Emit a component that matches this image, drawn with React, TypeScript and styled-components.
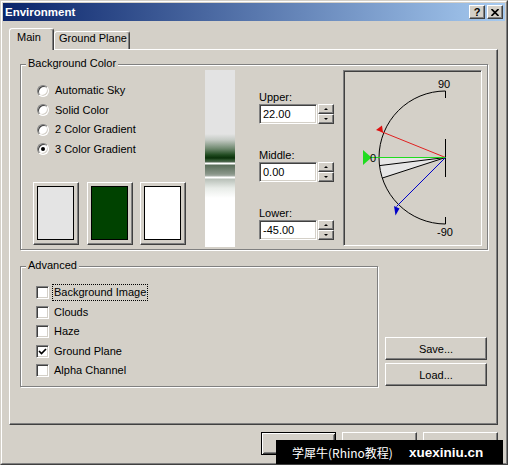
import React from 'react';
import styled, { createGlobalStyle, css } from 'styled-components';

const GlobalStyle = createGlobalStyle`
  html, body {
    margin: 0;
    padding: 0;
    background: #d4d0c8;
  }
  body {
    font-family: 'Liberation Sans', Arial, sans-serif;
    font-size: 11px;
    color: #000;
  }
`;

const raised = css`
  border: 1px solid;
  border-color: #fff #404040 #404040 #fff;
  box-shadow: inset -1px -1px 0 #808080, inset 1px 1px 0 #d4d0c8;
`;

const sunken = css`
  border: 1px solid;
  border-color: #808080 #fff #fff #808080;
  box-shadow: inset 1px 1px 0 #404040, inset -1px -1px 0 #d4d0c8;
`;

const Window = styled.div`
  position: relative;
  box-sizing: border-box;
  width: 508px;
  height: 465px;
  overflow: hidden;
  background: #d4d0c8;
  border: 1px solid;
  border-color: #d4d0c8 #404040 #404040 #d4d0c8;
`;

const Frame = styled.div`
  box-sizing: border-box;
  height: 100%;
  padding: 1px;
  display: flex;
  flex-direction: column;
  border: 1px solid;
  border-color: #fff #808080 #808080 #fff;
`;

const TitleBar = styled.div`
  height: 18px;
  flex: none;
  display: flex;
  align-items: center;
  padding: 0 2px;
  background: linear-gradient(to right, #0a246a, #a6caf0);
`;

const TitleText = styled.span`
  flex: 1;
  color: #fff;
  font-weight: 700;
  font-size: 11.5px;
`;

const CaptionButtons = styled.div`
  display: flex;
  gap: 2px;
`;

const CaptionButton = styled.div`
  ${raised};
  box-sizing: border-box;
  width: 16px;
  height: 14px;
  background: #d4d0c8;
  display: flex;
  align-items: center;
  justify-content: center;
  font-weight: 700;
  font-size: 11px;
  line-height: 1;
`;

const Body = styled.div`
  flex: 1;
  display: flex;
  flex-direction: column;
  padding: 7px 7px 0 6px;
`;

const TabStrip = styled.div`
  height: 21px;
  display: flex;
  align-items: flex-end;
`;

const Tab = styled.div<{ $active?: boolean; $w: number; $pad: number }>`
  position: relative;
  box-sizing: border-box;
  width: ${(p) => p.$w}px;
  padding-left: ${(p) => p.$pad}px;
  background: #d4d0c8;
  border: 1px solid;
  border-bottom: none;
  border-color: #fff #404040 transparent #fff;
  border-radius: 3px 3px 0 0;
  box-shadow: inset -1px 0 0 #808080;
  line-height: 13px;
  ${(p) =>
    p.$active
      ? css`
          height: 22px;
          margin-bottom: -1px;
          padding-top: 2px;
          z-index: 2;
        `
      : css`
          height: 18px;
          padding-top: 0;
        `}
`;

const Panel = styled.div`
  box-sizing: border-box;
  height: 376px;
  padding: 14px 0 0 10px;
  display: flex;
  flex-direction: column;
  border: 1px solid;
  border-color: #fff #404040 #404040 #fff;
  box-shadow: inset -1px -1px 0 #808080;
`;

const GroupBox = styled.div<{ $w: number; $h: number }>`
  position: relative;
  box-sizing: border-box;
  width: ${(p) => p.$w}px;
  height: ${(p) => p.$h}px;
  border: 1px solid #808080;
  box-shadow: inset 1px 1px 0 #fff, 1px 1px 0 #fff;
`;

const GroupLabel = styled.span`
  position: absolute;
  top: -8px;
  left: 5px;
  padding: 0 2px;
  line-height: 13px;
  background: #d4d0c8;
`;

const BackgroundRow = styled.div`
  display: flex;
  align-items: flex-start;
  padding-top: 5px;
`;

const LeftColumn = styled.div`
  width: 153px;
  margin-left: 12px;
  display: flex;
  flex-direction: column;
`;

const OptionList = styled.div<{ $top: number; $left: number }>`
  display: flex;
  flex-direction: column;
  margin-top: ${(p) => p.$top}px;
  padding-left: ${(p) => p.$left}px;
`;

const OptionRow = styled.div<{ $gap: number }>`
  height: 19.5px;
  display: flex;
  align-items: center;
  gap: ${(p) => p.$gap}px;
`;

const Radio = styled.span<{ $checked?: boolean }>`
  box-sizing: border-box;
  width: 12px;
  height: 12px;
  border-radius: 50%;
  background: #fff;
  border: 1px solid;
  border-color: #808080 #fff #fff #808080;
  box-shadow: inset 1px 1px 0 #404040, inset -1px -1px 0 #d4d0c8;
  display: flex;
  align-items: center;
  justify-content: center;
  &::after {
    content: '';
    width: 4px;
    height: 4px;
    border-radius: 50%;
    background: #000;
    display: ${(p) => (p.$checked ? 'block' : 'none')};
  }
`;

const CheckBox = styled.span`
  ${sunken};
  box-sizing: border-box;
  width: 13px;
  height: 13px;
  background: #fff;
  display: flex;
  align-items: center;
  justify-content: center;
`;

const OptionText = styled.span<{ $focused?: boolean }>`
  line-height: 13px;
  ${(p) =>
    p.$focused &&
    css`
      outline: 1px dotted #000;
      outline-offset: 1px;
    `}
`;

const Swatches = styled.div`
  display: flex;
  gap: 7.5px;
  margin-top: 23px;
`;

const Swatch = styled.div`
  ${raised};
  box-sizing: border-box;
  width: 46px;
  height: 63px;
  padding: 3px 4px 4px 3px;
  display: flex;
`;

const SwatchFill = styled.div<{ $color: string }>`
  flex: 1;
  border: 1px solid #000;
  background: ${(p) => p.$color};
`;

const GradientBar = styled.div`
  width: 30px;
  height: 177px;
  margin-left: 19px;
  background: linear-gradient(
    to bottom,
    #e3e3e3 0px,
    #e3e3e3 64px,
    #c4cac4 70px,
    #6b856b 79px,
    #1f4a1f 85px,
    #0a300a 88px,
    #2f552f 90px,
    #506650 92px,
    #ffffff 93px,
    #ffffff 94px,
    #5a6e5a 95px,
    #8a968a 104px,
    #a6aea6 106px,
    #ffffff 107px,
    #ffffff 108px,
    #b8c0b8 109px,
    #e8ece8 118px,
    #ffffff 128px,
    #ffffff 177px
  );
`;

const SpinColumn = styled.div`
  width: 75px;
  margin-left: 24px;
  margin-top: 20px;
  display: flex;
  flex-direction: column;
  gap: 24px;
`;

const SpinLabel = styled.div`
  line-height: 14px;
`;

const SpinRow = styled.div`
  display: flex;
  gap: 1px;
  height: 20px;
`;

const SpinInput = styled.div`
  ${sunken};
  box-sizing: border-box;
  width: 58px;
  background: #fff;
  padding-left: 3px;
  display: flex;
  align-items: center;
`;

const SpinButtons = styled.div`
  width: 16px;
  display: flex;
  flex-direction: column;
`;

const SpinButton = styled.div<{ $down?: boolean }>`
  ${raised};
  box-sizing: border-box;
  flex: 1;
  display: flex;
  align-items: center;
  justify-content: center;
  &::after {
    content: '';
    border-left: 2px solid transparent;
    border-right: 2px solid transparent;
    ${(p) =>
      p.$down
        ? css`
            border-top: 2px solid #000;
          `
        : css`
            border-bottom: 2px solid #000;
          `}
  }
`;

const Diagram = styled.div`
  ${sunken};
  box-sizing: border-box;
  width: 139px;
  height: 176px;
  margin-left: 9px;
  display: flex;
`;

const LowerRow = styled.div`
  display: flex;
  align-items: flex-end;
  margin-top: 16px;
`;

const ButtonColumn = styled.div`
  display: flex;
  flex-direction: column;
  gap: 3px;
  margin-left: 7px;
  margin-bottom: 1px;
`;

const PushButton = styled.div<{ $w: number; $default?: boolean }>`
  box-sizing: border-box;
  width: ${(p) => p.$w}px;
  height: 23px;
  display: flex;
  align-items: center;
  justify-content: center;
  background: #d4d0c8;
  ${(p) =>
    p.$default
      ? css`
          border: 1px solid #000;
          box-shadow: inset 1px 1px 0 #fff, inset -1px -1px 0 #404040,
            inset 2px 2px 0 #d4d0c8, inset -2px -2px 0 #808080;
        `
      : raised}
`;

const Footer = styled.div`
  display: flex;
  justify-content: flex-end;
  gap: 6px;
  margin-top: 7px;
`;

const Watermark = styled.div`
  position: absolute;
  right: 4px;
  bottom: -1px;
  width: 227px;
  height: 25px;
  background: #000;
  color: #fff;
  display: flex;
  align-items: center;
  padding-left: 16px;
  box-sizing: border-box;
  gap: 16px;
`;

const WatermarkCn = styled.span`
  font-family: 'Noto Sans CJK SC', 'Liberation Serif', serif;
  font-size: 12px;
`;

const WatermarkUrl = styled.span`
  font-family: 'Liberation Sans', Arial, sans-serif;
  font-weight: 700;
  font-size: 13.5px;
`;

const radios = ['Automatic Sky', 'Solid Color', '2 Color Gradient', '3 Color Gradient'];
const checks = [
  { label: 'Background Image', checked: false, focused: true },
  { label: 'Clouds', checked: false },
  { label: 'Haze', checked: false },
  { label: 'Ground Plane', checked: true },
  { label: 'Alpha Channel', checked: false },
];
const spins = [
  { label: 'Upper:', value: '22.00' },
  { label: 'Middle:', value: '0.00' },
  { label: 'Lower:', value: '-45.00' },
];

const AngleDiagram = () => (
  <svg width={135} height={172} viewBox="345 72 135 172">
    <path d="M446.5 158.5 L380 158.5 A66.5 66.5 0 0 0 383.25 179.05 Z" fill="#e6e6e6" />
    <path d="M446.5 92 A66.5 66.5 0 0 0 446.5 225" fill="none" stroke="#000" />
    <path d="M446.5 92 V99 M446.5 225 V218 M446.5 140 V178" stroke="#000" />
    <path d="M446.5 158.5 L380.5 166.6 M446.5 158.5 L383.25 179.05" stroke="#000" />
    <line x1={446.5} y1={158.5} x2={381.6} y2={132.3} stroke="#e02020" />
    <polygon points="383,126.5 384,133.5 377,131" fill="#e01010" />
    <line x1={446.5} y1={158.5} x2={397.5} y2={207.5} stroke="#0000c8" />
    <polygon points="395,207 400.5,209.5 396.5,216.5" fill="#0000c8" />
    <line x1={446.5} y1={158.5} x2={371} y2={158.5} stroke="#1fdc1f" />
    <polygon points="364,151 364,166 372.5,158.5" fill="#1fdc1f" />
    <g fontFamily="Liberation Sans, Arial, sans-serif" fontSize={11} fill="#000">
      <text x={439} y={89}>90</text>
      <text x={438} y={237}>-90</text>
      <text x={371} y={163}>0</text>
    </g>
  </svg>
);

const CheckMark = () => (
  <svg width={9} height={9} viewBox="0 0 9 9">
    <path d="M1 4 L3.5 6.5 L8 2" fill="none" stroke="#000" strokeWidth={1.7} />
  </svg>
);

const CloseGlyph = () => (
  <svg width={8} height={7} viewBox="0 0 8 7">
    <path d="M0.5 0 L7.5 7 M7.5 0 L0.5 7" stroke="#000" strokeWidth={1.6} />
  </svg>
);

const App: React.FC = () => {
  return (
    <>
      <GlobalStyle />
      <Window>
        <Frame>
          <TitleBar>
            <TitleText>Environment</TitleText>
            <CaptionButtons>
              <CaptionButton>?</CaptionButton>
              <CaptionButton>
                <CloseGlyph />
              </CaptionButton>
            </CaptionButtons>
          </TitleBar>
          <Body>
            <TabStrip>
              <Tab $active $w={45} $pad={7}>
                Main
              </Tab>
              <Tab $w={76} $pad={4}>
                Ground Plane
              </Tab>
            </TabStrip>
            <Panel>
              <GroupBox $w={468} $h={186}>
                <GroupLabel>Background Color</GroupLabel>
                <BackgroundRow>
                  <LeftColumn>
                    <OptionList $top={11} $left={4}>
                      {radios.map((r, i) => (
                        <OptionRow key={r} $gap={6}>
                          <Radio $checked={i === 3} />
                          <OptionText>{r}</OptionText>
                        </OptionRow>
                      ))}
                    </OptionList>
                    <Swatches>
                      <Swatch>
                        <SwatchFill $color="#e4e4e4" />
                      </Swatch>
                      <Swatch>
                        <SwatchFill $color="#004200" />
                      </Swatch>
                      <Swatch>
                        <SwatchFill $color="#ffffff" />
                      </Swatch>
                    </Swatches>
                  </LeftColumn>
                  <GradientBar />
                  <SpinColumn>
                    {spins.map((s) => (
                      <div key={s.label}>
                        <SpinLabel>{s.label}</SpinLabel>
                        <SpinRow>
                          <SpinInput>{s.value}</SpinInput>
                          <SpinButtons>
                            <SpinButton />
                            <SpinButton $down />
                          </SpinButtons>
                        </SpinRow>
                      </div>
                    ))}
                  </SpinColumn>
                  <Diagram>
                    <AngleDiagram />
                  </Diagram>
                </BackgroundRow>
              </GroupBox>
              <LowerRow>
                <GroupBox $w={358} $h={121}>
                  <GroupLabel>Advanced</GroupLabel>
                  <OptionList $top={16} $left={15}>
                    {checks.map((c) => (
                      <OptionRow key={c.label} $gap={5}>
                        <CheckBox>{c.checked && <CheckMark />}</CheckBox>
                        <OptionText $focused={c.focused}>{c.label}</OptionText>
                      </OptionRow>
                    ))}
                  </OptionList>
                </GroupBox>
                <ButtonColumn>
                  <PushButton $w={102}>Save...</PushButton>
                  <PushButton $w={102}>Load...</PushButton>
                </ButtonColumn>
              </LowerRow>
            </Panel>
            <Footer>
              <PushButton $w={75} $default>
                OK
              </PushButton>
              <PushButton $w={75}>Cancel</PushButton>
              <PushButton $w={75}>Help</PushButton>
            </Footer>
          </Body>
        </Frame>
        <Watermark>
          <WatermarkCn>学犀牛(Rhino教程)</WatermarkCn>
          <WatermarkUrl>xuexiniu.cn</WatermarkUrl>
        </Watermark>
      </Window>
    </>
  );
};

export default App;
